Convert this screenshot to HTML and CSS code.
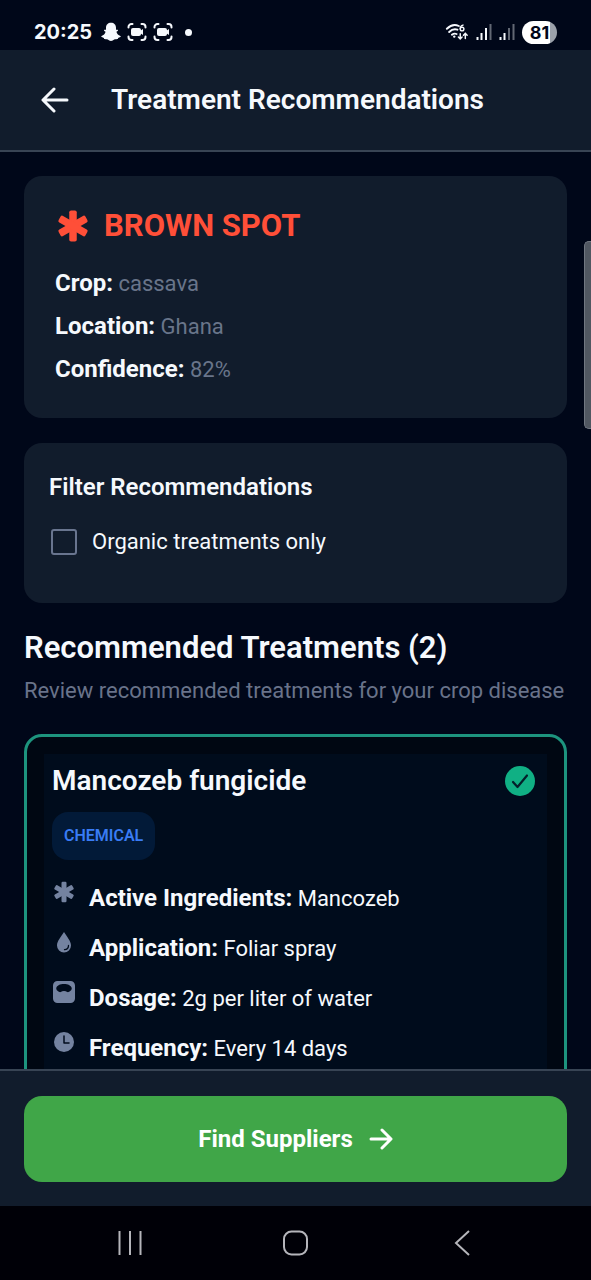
FILE: index.html
```html
<!DOCTYPE html>
<html lang="en">
<head>
<meta charset="utf-8">
<meta name="viewport" content="width=device-width, initial-scale=1">
<title>Treatment Recommendations</title>
<link rel="stylesheet" href="styles.css">
</head>
<body>
  <svg class="sprite" aria-hidden="true">
    <symbol id="asterisk" viewBox="0 0 24 24">
      <g fill="currentColor">
        <rect x="9.500" y="1.700" width="5" height="20.600" rx="1.200"/>
        <rect x="9.500" y="1.700" width="5" height="20.600" rx="1.200" transform="rotate(60 12 12)"/>
        <rect x="9.500" y="1.700" width="5" height="20.600" rx="1.200" transform="rotate(120 12 12)"/>
      </g>
    </symbol>
    <symbol id="record" viewBox="0 0 20 20">
      <path d="M1.500 5.500V5a3 3 0 0 1 3-3h1M14.500 2h1a3 3 0 0 1 3 3v.5M18.500 14.500v.5a3 3 0 0 1-3 3h-1M5.500 18h-1a3 3 0 0 1-3-3v-.5" fill="none" stroke="currentColor" stroke-width="2" stroke-linecap="round"/>
      <rect x="4" y="6" width="10" height="8" rx="2" fill="currentColor"/>
      <path d="M13 9l3-2v6l-3-2z" fill="currentColor"/>
    </symbol>
    <symbol id="signal" viewBox="0 0 16 18">
      <path d="M1.500 14v3M5.500 10v7" stroke="currentColor" stroke-width="2"/>
      <path d="M14.500 1v16" stroke="currentColor" stroke-width="2" opacity=".4"/>
    </symbol>
  </svg>

  <div class="status">
    <div class="status-left">
      <span class="time">20:25</span>
      <svg class="ghost" viewBox="0 0 20 20"><path d="M10 .8c3 0 5 2 5 5v2c.6 0 1.600-.5 2 .2.400.8-1 1.400-1.600 1.800.6 2 2 3.600 4 4.200.5.200.4.800 0 1-.8.500-1.800.500-2.200.9-.3.400-.2 1-.8 1.200-1 .2-2-.2-3.200.5-1 .7-1.800 1.500-3.200 1.500s-2.200-.8-3.200-1.500c-1.200-.7-2.200-.3-3.200-.5-.6-.2-.5-.8-.8-1.200-.4-.4-1.400-.4-2.200-.9-.4-.2-.5-.8 0-1 2-.6 3.400-2.200 4-4.200C4 9.400 2.600 8.800 3 8c.4-.7 1.400-.2 2-.2v-2c0-3 2-5 5-5z" fill="currentColor"/></svg>
      <svg class="rec" viewBox="0 0 20 20"><use href="#record"/></svg>
      <svg class="rec" viewBox="0 0 20 20"><use href="#record"/></svg>
      <span class="dot"></span>
    </div>
    <div class="status-right">
      <svg class="wifi" viewBox="0 0 26 20">
        <g fill="none" stroke="currentColor" stroke-width="2" stroke-linecap="round">
          <path d="M2 6.500c4-4 9-5 13-3M4.500 10c3-3 6-3.500 9-2.500M7.500 13c2-1.600 3.500-1.600 5-.8"/>
          <path d="M19.500 2.500c-2 .5-3 2.200-3 4" stroke-width="1.500"/>
          <circle cx="18.500" cy="6.800" r="2" stroke-width="1.500"/>
          <path d="M16.500 12v5.500M14.500 15.500l2 2 2-2M22 17v-5.500M20 13.500l2-2 2 2" stroke-width="1.600"/>
        </g>
        <circle cx="10" cy="15" r="1.300" fill="currentColor"/>
      </svg>
      <svg class="signal" viewBox="0 0 16 18"><use href="#signal"/><path d="M10 5v12" stroke="currentColor" stroke-width="2"/></svg>
      <svg class="signal" viewBox="0 0 16 18"><use href="#signal"/><path d="M10 5v12" stroke="currentColor" stroke-width="2" opacity=".4"/></svg>
      <span class="battery">81</span>
    </div>
  </div>

  <header class="header">
    <button class="back" type="button" aria-label="Back">
      <svg viewBox="0 0 28 28"><path d="M26 14H2.500M13 3L2 14l11 11" fill="none" stroke="currentColor" stroke-width="3" stroke-linecap="round" stroke-linejoin="round"/></svg>
    </button>
    <h1>Treatment Recommendations</h1>
  </header>

  <main class="content">
    <section class="card disease">
      <h2><svg viewBox="0 0 24 24"><use href="#asterisk"/></svg>BROWN SPOT</h2>
      <p><b>Crop:</b> cassava</p>
      <p><b>Location:</b> Ghana</p>
      <p><b>Confidence:</b> 82%</p>
    </section>

    <section class="card filter">
      <h3>Filter Recommendations</h3>
      <label for="organic"><input type="checkbox" id="organic"> Organic treatments only</label>
    </section>

    <h2 class="section-title">Recommended Treatments (2)</h2>
    <p class="section-sub">Review recommended treatments for your crop disease</p>

    <article class="treatment">
      <div class="treatment-head">
        <h3>Mancozeb fungicide</h3>
        <svg class="check" viewBox="0 0 30 30"><circle cx="15" cy="15" r="15" fill="#10b084"/><path d="M8 16l4.500 5L22 9.500" fill="none" stroke="#04202a" stroke-width="2.200" stroke-linecap="round" stroke-linejoin="round"/></svg>
      </div>
      <span class="tag">CHEMICAL</span>
      <ul>
        <li>
          <svg viewBox="0 0 24 24"><use href="#asterisk"/></svg>
          <span><b>Active Ingredients:</b> Mancozeb</span>
        </li>
        <li>
          <svg viewBox="0 0 24 24"><path d="M12 2C9 7 5 11 5 15.500a7 7 0 0 0 14 0C19 11 15 7 12 2z" fill="currentColor"/><path d="M16.500 15.500c0 2.500-1.500 4-4 4.200" fill="none" stroke="#000c1c" stroke-width="1.300" stroke-linecap="round"/></svg>
          <span><b>Application:</b> Foliar spray</span>
        </li>
        <li>
          <svg viewBox="0 0 24 24"><path fill-rule="evenodd" d="M5.500 1h13A4.500 4.500 0 0 1 23 5.500v13a4.500 4.500 0 0 1-4.500 4.500h-13A4.500 4.500 0 0 1 1 18.500v-13A4.500 4.500 0 0 1 5.500 1zM12 4C8 4 5 5.500 4.300 8c-.2 1 .3 2 1.200 2.800 1 .9 2.500 1.700 3.300 1.200.8-.6 2-.9 3.200-.9s2.400.3 3.200.9c.8.500 2.300-.3 3.300-1.200.9-.8 1.400-1.800 1.200-2.800C19 5.500 16 4 12 4z" fill="currentColor"/></svg>
          <span><b>Dosage:</b> 2g per liter of water</span>
        </li>
        <li>
          <svg viewBox="0 0 24 24"><circle cx="12" cy="12" r="10" fill="currentColor"/><path d="M12 6v7h5" fill="none" stroke="#000c1c" stroke-width="1.500" stroke-linecap="round" stroke-linejoin="round"/></svg>
          <span><b>Frequency:</b> Every 14 days</span>
        </li>
      </ul>
    </article>
    <span class="scroll-thumb"></span>
  </main>

  <footer class="footer">
    <button class="find" type="button">Find Suppliers
      <svg viewBox="0 0 24 24"><path d="M2 12h19M13 3l9 9-9 9" fill="none" stroke="currentColor" stroke-width="3" stroke-linecap="round" stroke-linejoin="round"/></svg>
    </button>
  </footer>

  <nav class="navbar">
    <button type="button" aria-label="Recent apps"><svg viewBox="0 0 28 28"><path d="M3.500 2v24M14 2v24M24.500 2v24" stroke="currentColor" stroke-width="2"/></svg></button>
    <button type="button" aria-label="Home"><svg viewBox="0 0 28 28"><rect x="3" y="2.500" width="23" height="23" rx="7.500" fill="none" stroke="currentColor" stroke-width="2"/></svg></button>
    <button type="button" aria-label="Go back"><svg viewBox="0 0 28 28"><path d="M22 2L9 14l13 12" fill="none" stroke="currentColor" stroke-width="2"/></svg></button>
  </nav>
</body>
</html>
```
FILE: styles.css
```css
* { box-sizing: border-box; }
body {
  display: flex;
  flex-direction: column;
  height: 100vh;
  margin: 0;
  overflow: hidden;
  background: #000719;
  color: #f6f9fd;
  font-family: Roboto, sans-serif;
  font-size: 22px;
  line-height: 32px;
}
h1, h2, h3, p, ul { margin: 0; padding: 0; }
h1, h2, h3 { font-weight: 600; }
b { font-size: 24px; font-weight: 700; color: #f6f9fd; }
button { border: 0; padding: 0; background: none; color: inherit; font: inherit; }
svg { display: block; flex: none; }
.sprite { position: absolute; width: 0; height: 0; }

/* status bar */
.status {
  display: flex;
  justify-content: space-between;
  flex: none;
  height: 50px;
  padding: 14px 34px 0 34px;
}
.status-left, .status-right { display: flex; align-items: center; height: 36px; }
.status-left { gap: 6px; }
.status-right { gap: 7px; }
.time { margin-right: 3px; font-family: Inter, sans-serif; font-size: 20px; font-weight: 700; }
.ghost, .rec { width: 20px; height: 20px; }
.dot { width: 7px; height: 7px; margin-left: 6px; border-radius: 50%; background: #f6f9fd; }
.wifi { width: 24px; height: 20px; }
.signal { width: 16px; height: 18px; }
.battery {
  width: 35px;
  height: 23px;
  border-radius: 12px;
  background: linear-gradient(90deg, #fff 81%, #9ba1aa 81%);
  color: #000719;
  font: 700 18px/23px Inter, sans-serif;
  text-align: center;
}

.header {
  display: flex;
  align-items: center;
  flex: none;
  gap: 42px;
  height: 102px;
  padding: 0 41px;
  border-bottom: 2px solid #384454;
  background: #111c2c;
}
.header h1 { font-size: 28px; }
.back svg { width: 28px; height: 28px; }

.content {
  position: relative;
  flex: 1;
  min-height: 0;
  padding: 24px 24px 0;
  overflow: hidden;
}
.card { margin-bottom: 25px; border-radius: 18px; background: #111c2c; }

.disease { padding: 32px 31px; color: #69758a; }
.disease h2 {
  display: flex;
  align-items: center;
  gap: 13px;
  margin-bottom: 23px;
  color: #ff4f38;
  font-size: 31px;
  font-weight: 700;
  line-height: 36px;
}
.disease h2 svg { width: 36px; height: 36px; }
.disease p + p { margin-top: 10px; }

.filter { padding: 28px 25px 45px; }
.filter h3 { margin-bottom: 23px; font-size: 24px; }
.filter label { display: flex; align-items: center; gap: 15px; margin-left: 2px; }
.filter input {
  width: 26px;
  height: 26px;
  margin: 0;
  border: 2px solid #69758f;
  border-radius: 3px;
  appearance: none;
}
.filter input:checked { background: #10b084; }

.section-title { font-size: 31px; line-height: 40px; }
.section-sub { margin: 7px 0 27px; color: #69738a; }

.treatment {
  padding: 24px 25px;
  border: 3px solid #1d947e;
  border-radius: 18px;
  background: #000c1c;
  box-shadow: inset 0 0 0 17px #000712;
}
.treatment-head { display: flex; justify-content: space-between; align-items: center; padding-right: 4px; }
.treatment-head h3 { font-size: 28px; line-height: 40px; }
.check { width: 30px; height: 30px; }
.tag {
  display: inline-block;
  margin: 11px 0 20px;
  padding: 0 12px;
  border-radius: 16px;
  background: #021a38;
  color: #397cf5;
  font-size: 16px;
  font-weight: 600;
  line-height: 48px;
}
.treatment ul { list-style: none; }
.treatment li { display: flex; gap: 13px; margin-bottom: 13px; line-height: 36px; }
.treatment li svg { width: 24px; height: 24px; color: #7483a0; }

.scroll-thumb {
  position: absolute;
  top: 89px;
  right: 0;
  width: 7px;
  height: 188px;
  border: 1px solid #707781;
  border-right: 0;
  border-radius: 5px 0 0 5px;
  background: #505761;
}

.footer { flex: none; padding: 25px 24px 24px; border-top: 2px solid #384454; background: #111c2c; }
.find {
  display: flex;
  justify-content: center;
  align-items: center;
  gap: 16px;
  width: 100%;
  height: 86px;
  border-radius: 18px;
  background: #40a648;
  color: #fff;
  font-size: 24px;
  font-weight: 700;
}
.find svg { width: 24px; height: 24px; }

.navbar {
  display: flex;
  justify-content: space-around;
  align-items: center;
  flex: none;
  height: 74px;
  padding: 0 47px;
  background: #000007;
  color: #b5b5bb;
}
.navbar svg { width: 28px; height: 28px; }
```
